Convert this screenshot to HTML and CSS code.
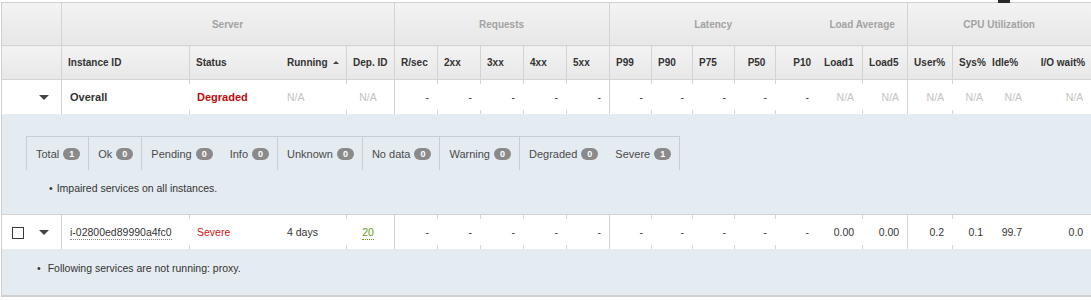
FILE: index.html
```html
<!DOCTYPE html>
<html lang="en">
<head>
    <meta charset="UTF-8">
    <title>Environment Health</title>
    <link rel="stylesheet" href="styles.css">
</head>
<body>

<span class="top-mark"></span>

<div class="health-wrap">
    <table class="health">
        <colgroup>
            <col class="w-toggle">
            <col class="w-id">
            <col class="w-status">
            <col class="w-running">
            <col class="w-dep">
            <col class="w-req"><col class="w-req"><col class="w-req"><col class="w-req"><col class="w-req">
            <col class="w-p99">
            <col class="w-p90">
            <col class="w-p75">
            <col class="w-p50">
            <col class="w-p10">
            <col class="w-load"><col class="w-load">
            <col class="w-user">
            <col class="w-sys">
            <col class="w-idle">
            <col class="w-io">
        </colgroup>
        <thead>
            <!-- group headers -->
            <tr class="groups">
                <th></th>
                <th colspan="4" class="g">Server</th>
                <th colspan="5" class="g">Requests</th>
                <th colspan="5" class="g">Latency</th>
                <th colspan="2">Load Average</th>
                <th colspan="4" class="g">CPU Utilization</th>
            </tr>
            <tr class="cols">
                <th></th>
                <th class="g">Instance ID</th>
                <th class="s">Status</th>
                <th class="sorted">Running <span class="sort-up"></span></th>
                <th class="s">Dep. ID</th>
                <th class="g">R/sec</th>
                <th class="s">2xx</th>
                <th class="s">3xx</th>
                <th class="s">4xx</th>
                <th class="s">5xx</th>
                <th class="g">P99</th>
                <th class="s">P90</th>
                <th class="s">P75</th>
                <th class="s hc">P50</th>
                <th class="s hr">P10</th>
                <th>Load1</th>
                <th class="s">Load5</th>
                <th class="g">User%</th>
                <th class="s">Sys%</th>
                <th class="tight">Idle%</th>
                <th class="hr">I/O wait%</th>
            </tr>
        </thead>
        <tbody>
            <!-- overall -->
            <tr class="row">
                <td class="toggle"><span class="chk off"></span><span class="caret"></span></td>
                <td class="g name"><b>Overall</b></td>
                <td class="s status degraded">Degraded</td>
                <td class="running na">N/A</td>
                <td class="s dep na">N/A</td>
                <td class="g num">-</td>
                <td class="s num">-</td>
                <td class="s num">-</td>
                <td class="s num">-</td>
                <td class="s num">-</td>
                <td class="g num">-</td>
                <td class="s num">-</td>
                <td class="s num">-</td>
                <td class="s num">-</td>
                <td class="s num">-</td>
                <td class="num na">N/A</td>
                <td class="s num na">N/A</td>
                <td class="g num na">N/A</td>
                <td class="s num na">N/A</td>
                <td class="num na">N/A</td>
                <td class="num na">N/A</td>
            </tr>
            <tr class="detail">
                <td colspan="21" class="detail-main">
                    <div class="tabs">
                        <div class="tab-group"><span class="tab">Total <span class="badge">1</span></span></div>
                        <div class="tab-group"><span class="tab">Ok <span class="badge">0</span></span></div>
                        <div class="tab-group">
                            <span class="tab">Pending <span class="badge">0</span></span>
                            <span class="tab">Info <span class="badge">0</span></span>
                        </div>
                        <div class="tab-group"><span class="tab">Unknown <span class="badge">0</span></span></div>
                        <div class="tab-group"><span class="tab">No data <span class="badge">0</span></span></div>
                        <div class="tab-group"><span class="tab">Warning <span class="badge">0</span></span></div>
                        <div class="tab-group">
                            <span class="tab">Degraded <span class="badge">0</span></span>
                            <span class="tab">Severe <span class="badge">1</span></span>
                        </div>
                    </div>
                    <p class="note note-main">Impaired services on all instances.</p>
                </td>
            </tr>

            <!-- instances -->
            <tr class="row instance">
                <td class="toggle"><span class="chk"></span><span class="caret"></span></td>
                <td class="g name"><span class="dotted">i-02800ed89990a4fc0</span></td>
                <td class="s status severe">Severe</td>
                <td class="running">4 days</td>
                <td class="s dep"><span class="dotted ok">20</span></td>
                <td class="g num">-</td>
                <td class="s num">-</td>
                <td class="s num">-</td>
                <td class="s num">-</td>
                <td class="s num">-</td>
                <td class="g num">-</td>
                <td class="s num">-</td>
                <td class="s num">-</td>
                <td class="s num">-</td>
                <td class="s num">-</td>
                <td class="num">0.00</td>
                <td class="s num">0.00</td>
                <td class="g num">0.2</td>
                <td class="s num">0.1</td>
                <td class="num">99.7</td>
                <td class="num">0.0</td>
            </tr>
            <tr class="detail">
                <td colspan="21" class="detail-sub">
                    <p class="note note-sub">Following services are not running: proxy.</p>
                </td>
            </tr>
        </tbody>
    </table>
</div>

</body>
</html>
```

FILE: styles.css
```css
body {
    margin: 0;
    font-family: "Liberation Sans", Arial, sans-serif;
    color: #333;
    background: #fff;
}
.top-mark {
    position: absolute;
    top: 0;
    left: 998px;
    width: 12px;
    height: 3px;
    background: #2a2a2a;
}
.health-wrap {
    margin: 2px 0 0 1px;
    width: 1089px;
    border-top: 1px solid #d0d0d0;
    border-left: 1px solid #d0d0d0;
    border-bottom: 1px solid #d0d0d0;
}
.health {
    width: 1089px;
    table-layout: fixed;
    border-collapse: collapse;
}
.w-toggle { width: 59px; }
.w-id { width: 128px; }
.w-status { width: 91px; }
.w-running { width: 66px; }
.w-dep { width: 48px; }
.w-req { width: 43px; }
.w-p99 { width: 42px; }
.w-p90 { width: 41px; }
.w-p75 { width: 42px; }
.w-p50 { width: 41px; }
.w-p10 { width: 42px; }
.w-load { width: 45px; }
.w-user { width: 45px; }
.w-sys { width: 39px; }
.w-idle { width: 39px; }
.w-io { width: 61px; }

/* header */
.health th {
    padding: 0 0 0 7px;
    font-size: 10px;
    font-weight: bold;
    text-align: left;
    white-space: nowrap;
    background: linear-gradient(#f3f3f3, #e7e7e7);
}
.health th.g,
.cols th.s {
    background: linear-gradient(#d3d3d3, #d3d3d3) 0 0 / 1px 100% no-repeat, linear-gradient(#f3f3f3, #e7e7e7);
}
.groups th {
    height: 42px;
    padding: 0;
    text-align: center;
    color: #a3a3a3;
    border-bottom: 1px solid #d3d3d3;
}
.cols th {
    height: 33px;
    color: #333;
    border-bottom: 1px solid #d3d3d3;
}
.cols th.sorted {
    text-align: right;
    padding-right: 14px;
}
.cols th.hc {
    text-align: center;
    padding: 0 0 0 4px;
}
.cols th.hr {
    text-align: right;
    padding: 0 6px 0 0;
}
.cols th.tight {
    padding-left: 1px;
}
.sort-up {
    display: inline-block;
    margin-left: 3px;
    vertical-align: 2px;
    border-left: 3px solid transparent;
    border-right: 3px solid transparent;
    border-bottom: 3px solid #444;
}

/* rows */
.row td {
    height: 34px;
    padding: 0 8px 0 0;
    font-size: 10.5px;
    color: #333;
    background: #fff;
    white-space: nowrap;
}
.row td.g {
    background: linear-gradient(#d3d3d3, #d3d3d3) 0 0 / 1px 100% no-repeat, #fff;
}
.row td.s {
    background: linear-gradient(#d3d3d3, #d3d3d3) 0 0 / 1px 4px no-repeat, linear-gradient(#d3d3d3, #d3d3d3) 0 100% / 1px 4px no-repeat, #fff;
}
.instance td {
    border-top: 1px solid #d3d3d3;
}
.row td.toggle {
    padding: 0 0 0 10px;
}
.toggle .chk {
    display: inline-block;
    width: 10px;
    height: 10px;
    border: 1px solid #3a3a3a;
    background: #fff;
    vertical-align: middle;
}
.toggle .chk.off {
    visibility: hidden;
}
.toggle .caret {
    display: inline-block;
    margin-left: 15px;
    vertical-align: middle;
    border-left: 5px solid transparent;
    border-right: 5px solid transparent;
    border-top: 5px solid #444;
}
.row td.name {
    padding-left: 9px;
}
.name b {
    font-size: 11px;
}
.row td.status {
    padding-left: 8px;
}
.status.degraded {
    font-size: 11px;
    font-weight: bold;
    color: #bb0b0b;
}
.status.severe {
    color: #cc1111;
}
.row td.running {
    padding-left: 7px;
}
.row td.dep {
    text-align: center;
    padding: 0 4px 0 0;
}
.row td.num {
    text-align: right;
}
.row td.na {
    color: #c2c2c2;
}
.dotted {
    border-bottom: 1px dotted #888;
    padding-bottom: 1px;
}
.dotted.ok {
    color: #5d9b15;
    border-bottom-color: #5d9b15;
}

/* detail panels */
.detail td {
    background: #e4ecf1;
    vertical-align: top;
    padding: 0;
}
.detail-main {
    height: 100px;
}
.detail-main .tabs {
    display: flex;
    width: max-content;
    margin: 22px 0 0 24px;
    border-top: 1px solid #c8cfd4;
    border-left: 1px solid #c8cfd4;
}
.tab-group {
    display: flex;
    align-items: center;
    height: 33px;
    border-right: 1px solid #c8cfd4;
}
.tab {
    display: flex;
    align-items: center;
    gap: 4px;
    padding: 0 8px 0 9px;
    font-size: 11px;
    color: #4a4a4a;
}
.badge {
    min-width: 17px;
    height: 12px;
    line-height: 12px;
    border-radius: 6px;
    background: #8a8a8a;
    color: #fff;
    font-size: 9px;
    font-weight: bold;
    text-align: center;
}
.detail-sub {
    height: 46px;
    border-bottom: 1px solid #d0d0d0;
}
.note {
    margin: 0;
    font-size: 10.5px;
    color: #333;
}
.note::before {
    content: "\2022";
    margin-right: 4px;
}
.note-main {
    margin: 12px 0 0 47px;
}
.note-sub {
    margin: 13px 0 0 35px;
}
.note-sub::before {
    margin-right: 7px;
}
```
